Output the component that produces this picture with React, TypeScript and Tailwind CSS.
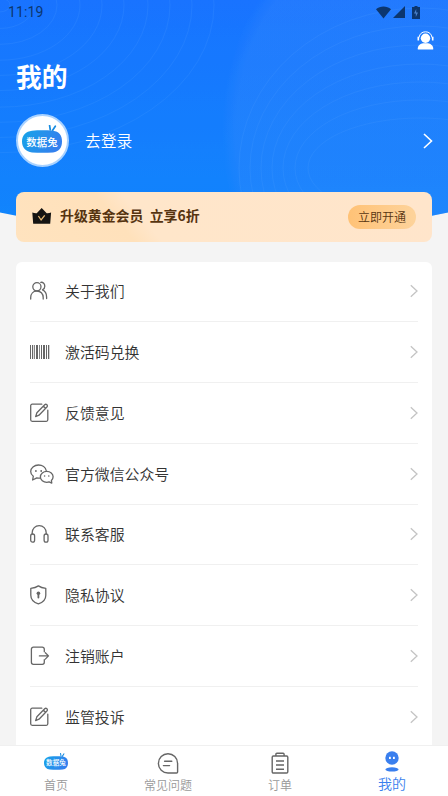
import React from "react";

interface MenuItem {
  label: string;
  icon: React.ReactNode;
}

// Shared wrapper for the thin grey line icons
const LineIcon: React.FC<{ children: React.ReactNode; width?: number }> = ({ children, width = 20 }) => (
  <svg
    width={width}
    height="20"
    viewBox={`0 0 ${width} 20`}
    fill="none"
    stroke="#666"
    strokeWidth="1.3"
    strokeLinecap="round"
    strokeLinejoin="round"
  >
    {children}
  </svg>
);

const UsersIcon = () => (
  <LineIcon>
    <circle cx="6.9" cy="5.800" r="4.1" />
    <path d="M.7 18v-1.500c0-3.800 2.600-6.500 6.200-6.500s6.300 2.700 6.300 6.500V18" />
    <path d="M10.800 1.300c2.300-.3 4 1.400 4 3.900 0 1.700-.9 3-2.300 3.700 2.500 1.100 4.100 3.600 4.100 7.100v1.500" />
  </LineIcon>
);

const BarcodeIcon = () => (
  <svg width="20" height="20" viewBox="0 0 20 20" fill="#666">
    <path d="M0 3h1v14H0zM2 3h1.200v14H2zM4.100 3h.8v14h-.8zM6 3h2v14H6zM9 3h.8v14H9zM11 3h1v14h-1zM13 3h2v14h-2zM16 3h1v14h-1zM18 3h1.300v14H18z" />
  </svg>
);

const EditIcon = () => (
  <LineIcon>
    <path d="M11.800 1.200H2.200a1.500 1.500 0 0 0-1.500 1.500v14.100a1.500 1.500 0 0 0 1.500 1.500h14.100a1.500 1.500 0 0 0 1.500-1.500V7.200" />
    <path d="M5.600 13.600l1.300-3.800 7.800-8c.6-.6 1.600-.6 2.200 0s.7 1.500 0 2.200l-7.900 8.200zM13.500 3.300l2 2" />
  </LineIcon>
);

const WechatIcon = () => (
  <LineIcon width={24}>
    <path d="M10.100 14.100c-1.200.1-2.200 0-3.300-.3L2.600 16l.7-3.700C1.600 11 .7 9.500.7 7.400.7 3.900 4.200 1 8.500 1c3.900 0 7.100 2.400 7.700 5.500" />
    <path d="M23.100 12.800c0-3.100-2.800-5.500-6.300-5.500s-6.400 2.500-6.400 5.600 2.900 5.400 6.400 5.400c.9 0 1.500-.1 2.300-.4l2.700 1.200-.4-2.600c1.100-1 1.700-2.200 1.700-3.700z" />
    <g fill="#666" stroke="none">
      <circle cx="5.900" cy="7" r=".9" />
      <circle cx="11.200" cy="7" r=".9" />
      <circle cx="14.600" cy="12" r=".8" />
      <circle cx="18.800" cy="12" r=".8" />
    </g>
  </LineIcon>
);

const HeadphoneIcon = () => (
  <LineIcon>
    <path d="M2.200 10V8.800C2.200 4.600 5.300 1.600 9.200 1.600s7 3 7 7.200V10" />
    <rect x=".7" y="10" width="3.900" height="8.200" rx="1.900" />
    <rect x="14.100" y="10" width="3.900" height="8.200" rx="1.900" />
  </LineIcon>
);

const ShieldIcon = () => (
  <LineIcon>
    <path d="M8.400.9c2.200 1.600 4.600 2.200 7.400 2.400v7c0 4.300-3.300 7.300-7.400 8.600C4.200 17.600.8 14.600.8 10.300v-7C3.700 3.100 6.200 2.500 8.400.9z" />
    <circle cx="8.400" cy="8.300" r="1.800" fill="#666" stroke="none" />
    <path d="M8.400 8.500v4" strokeWidth="1.800" />
  </LineIcon>
);

const LogoutIcon = () => (
  <LineIcon>
    <path d="M14.300 5.700V3.200a2 2 0 0 0-2-2H3.400a2 2 0 0 0-2 2v13.100a2 2 0 0 0 2 2h8.900a2 2 0 0 0 2-2v-2.600" />
    <path d="M9.400 9.900h9M15.300 6.700l3.200 3.200-3.200 3.200" />
  </LineIcon>
);

const ArrowRight = () => (
  <svg width="8" height="14" viewBox="0 0 8 14" fill="none" stroke="#c4c4c4" strokeWidth="1.300">
    <path d="M.8 1.200 7 7 .8 12.800" />
  </svg>
);

const RabbitLogo: React.FC<{ className: string; textClass: string }> = ({ className, textClass }) => (
  <svg className={className} viewBox="0 0 40 28">
    <defs>
      <linearGradient id="rabbit" x1="0" y1="0" x2="1" y2="0.3">
        <stop offset="0" stopColor="#16a4e8" />
        <stop offset="1" stopColor="#3380ee" />
      </linearGradient>
    </defs>
    <path d="M28.300 5 27.600.5M30.500 5.500 33.300 1.200" stroke="#168be0" strokeWidth="1.700" strokeLinecap="round" />
    <path d="M10 5.800C17 5.200 24 5.200 31 5.800c6 .6 9 4.600 9 10.600s-3 10.400-9 11c-7 .6-14 .6-21 0-6-.6-10-5-10-11s4-10 10-10.600z" fill="url(#rabbit)" />
    <text x="20" y="20.500" textAnchor="middle" fill="#fff" className={textClass}>
      数据兔
    </text>
    <path d="M16.500 22.700h8" stroke="#9bd5ff" strokeWidth=".8" strokeDasharray="1.200 .4" />
  </svg>
);

const menuItems: MenuItem[] = [
  { label: "关于我们", icon: <UsersIcon /> },
  { label: "激活码兑换", icon: <BarcodeIcon /> },
  { label: "反馈意见", icon: <EditIcon /> },
  { label: "官方微信公众号", icon: <WechatIcon /> },
  { label: "联系客服", icon: <HeadphoneIcon /> },
  { label: "隐私协议", icon: <ShieldIcon /> },
  { label: "注销账户", icon: <LogoutIcon /> },
  { label: "监管投诉", icon: <EditIcon /> },
];

// Horizontal and vertical radius of each contour on the right side
const contours = [
  [181, 160],
  [170, 142],
  [159, 123],
  [148, 104],
  [137, 86],
  [125, 68],
  [112, 50],
];

// Blue backdrop with contour lines and a curved lower edge
const HeaderBackdrop = () => (
  <svg className="absolute left-0 top-0" width="448" height="240" viewBox="0 0 448 240">
    <defs>
      <linearGradient id="sky" x1="0" y1="0" x2="0" y2="1">
        <stop offset="0" stopColor="#1974ff" />
        <stop offset="1" stopColor="#1187fc" />
      </linearGradient>
      <radialGradient id="glow">
        <stop offset="0.92" stopColor="#3889fc" stopOpacity=".32" />
        <stop offset="1" stopColor="#3889fc" stopOpacity="0" />
      </radialGradient>
      <clipPath id="curve">
        <path d="M0 0h448v212.500Q224 260 0 212.500z" />
      </clipPath>
    </defs>
    <g clipPath="url(#curve)">
      <path d="M0 0h448v240H0z" fill="url(#sky)" />
      <ellipse cx="400" cy="130" rx="178" ry="215" fill="url(#glow)" />
      <g fill="none" stroke="#58a4ff" strokeWidth=".8" opacity=".2">
        {contours.map(([rx, ry]) => (
          <ellipse key={rx} cx="420" cy="168" rx={rx} ry={ry} />
        ))}
        {[10, 34, 57, 80, 102, 124, 148, 170, 192, 214].map((r) => (
          <ellipse key={r} cx="0" cy="5" rx={r} ry={r * 0.69} />
        ))}
      </g>
    </g>
  </svg>
);

const StatusBar = () => (
  <div className="flex h-6 items-center justify-between pl-2 pr-7 text-[#0c366e]">
    <span className="font-[Roboto,sans-serif] text-[14px] leading-6 tracking-[0.15px]">11:19</span>
    <div className="flex items-center gap-[2px]">
      <svg width="15" height="13" viewBox="0 0 15 13" fill="currentColor">
        <path d="M0 3.300C4.200-.5 10.800-.5 15 3.300L7.500 12.500z" />
      </svg>
      <svg width="12" height="12" viewBox="0 0 12 12" fill="currentColor">
        <path d="M12 0v12H0z" />
      </svg>
      <svg className="ml-[5px]" width="8" height="13" viewBox="0 0 8 13">
        <path d="M2.500 0h3v1H8v12H0V1h2.500z" fill="currentColor" />
        <path d="M4.200 3 2 7.500h1.800V11L6 6.500H4.200z" fill="#4c82cb" />
      </svg>
    </div>
  </div>
);

const MenuRow: React.FC<{ item: MenuItem }> = ({ item }) => (
  <div className="flex h-[60.75px] shrink-0 items-center border-b border-[#f0f0f0]">
    <div className="w-[35px]">{item.icon}</div>
    <span className="flex-1 text-[14.9px] font-[350] leading-5 text-[#333]">{item.label}</span>
    <ArrowRight />
  </div>
);

const TabBar = () => (
  <nav className="relative grid h-[51px] shrink-0 grid-cols-4 border-t border-[#f0f0f0] bg-white text-[12px] font-[350] leading-4 text-[#999]">
    <div className="flex flex-col items-center pt-[7px]">
      <RabbitLogo className="h-[17px] w-6" textClass="text-[11px] font-medium" />
      <span className="mt-[7px]">首页</span>
    </div>
    <div className="flex flex-col items-center pt-[7px]">
      <svg width="22" height="21" viewBox="0 0 22 21" fill="none" stroke="#666" strokeWidth="1.400" strokeLinecap="round">
        <path d="M11 .8a9.600 9.600 0 1 0 0 19.200h8.600a1 1 0 0 0 1-1v-8.600A9.600 9.600 0 0 0 11 .8z" />
        <path d="M7.600 8.300h7.200M6.400 12.600h6.200" />
      </svg>
      <span className="mt-[3px]">常见问题</span>
    </div>
    <div className="flex flex-col items-center pt-[6px]">
      <svg width="18" height="22" viewBox="0 0 18 22" fill="none" stroke="#666" strokeWidth="1.400">
        <rect x="1.200" y="4" width="15.600" height="17" rx="1.200" />
        <path d="M4.900 4V2.200c0-.7.4-1 1-1h6.200c.6 0 1 .3 1 1V4M5 9h8M5 13h8M5 17.200h8" />
      </svg>
      <span className="mt-[3px]">订单</span>
    </div>
    <div className="flex flex-col items-center pt-[5px] text-[14px] text-[#3a7fee]">
      <svg width="14" height="21" viewBox="0 0 14 21" fill="currentColor">
        <circle cx="7" cy="7" r="6.700" />
        <ellipse cx="7" cy="18.400" rx="6.600" ry="2.100" />
        <rect x="4" y="5.800" width="1.800" height="2.200" fill="#fff" />
        <rect x="8" y="5.800" width="1.800" height="2.200" fill="#fff" />
      </svg>
      <span className="mt-[3px]">我的</span>
    </div>
  </nav>
);

const App: React.FC = () => {
  return (
    <div className="relative flex h-[796px] w-[448px] flex-col overflow-hidden bg-[#f4f4f4] font-['Noto_Sans_CJK_SC',sans-serif]">
      <HeaderBackdrop />

      <header className="relative h-48 shrink-0">
        <StatusBar />
        <div className="flex justify-end pr-[14px] pt-[7px]">
          <svg width="17" height="19" viewBox="0 0 17 19" fill="#fff">
            <circle cx="8.500" cy="7.200" r="4.700" />
            <path d="M.8 18.500v-1.200c0-2.700 2.700-4.500 5.200-5h5c2.500.5 5.200 2.300 5.200 5v1.200z" />
            <path d="M2 6.500C2.500 2.800 5 .8 8.500.8s6 2 6.500 5.700" fill="none" stroke="#fff" />
            <path d="M.5 5.800h1.600v3.800H.5zM14.900 5.800h1.600v3.800h-1.600z" />
          </svg>
        </div>
        <h1 className="ml-4 mt-2 text-[25.800px] font-bold leading-9 text-white">我的</h1>
        <div className="mt-5 flex items-center pl-4 pr-[15px]">
          <div className="flex h-[53px] w-[53px] items-center justify-center rounded-full border-2 border-[#a9d2ff] bg-white">
            <RabbitLogo className="mb-[3px] mr-px h-7 w-10" textClass="text-[10.500px] font-medium" />
          </div>
          <span className="ml-4 flex-1 text-[15.800px] font-[350] leading-6 text-white">去登录</span>
          <svg width="10" height="16" viewBox="0 0 10 16" fill="none" stroke="#fff" strokeWidth="1.600">
            <path d="M1 1l7.500 7L1 15" />
          </svg>
        </div>
      </header>

      {/* Membership banner */}
      <section className="relative mx-4 flex h-[50px] shrink-0 items-center rounded-lg bg-[linear-gradient(50deg,#ffe3bf_0%,#ffe1bb_26%,#ffe6ca_32%,#ffe5cb_100%)] pl-4 pr-4">
        <svg className="mb-[3px]" width="20" height="18" viewBox="0 0 20 18">
          <path d="M.3 5.500c1.600.5 2.900.9 4.400.7L9.700 1l5 5.200c1.500.2 2.900-.2 4.400-.7l-.9 11.300H1.200z" fill="#151412" />
          <path d="M6.400 9l2.700 4 3.600-4.700" fill="none" stroke="#e6b974" strokeWidth="1.300" />
        </svg>
        <span className="mb-[5px] ml-2 flex-1 whitespace-pre text-[13.900px] font-bold leading-5 text-[#563410]">升级黄金会员  立享6折</span>
        <button className="h-6 w-[68px] rounded-full bg-linear-to-r from-[#ffc276] to-[#fdd39b] text-[12px] font-[350] leading-6 text-[#563410]">
          立即开通
        </button>
      </section>

      <main className="relative mx-4 mt-5 flex min-h-0 flex-1 flex-col overflow-hidden rounded-t-md bg-white px-[14px]">
        <div className="-mt-[0.5px] flex flex-col">
          {menuItems.map((item) => (
            <MenuRow key={item.label} item={item} />
          ))}
        </div>
      </main>

      <TabBar />
    </div>
  );
};

export default App;
